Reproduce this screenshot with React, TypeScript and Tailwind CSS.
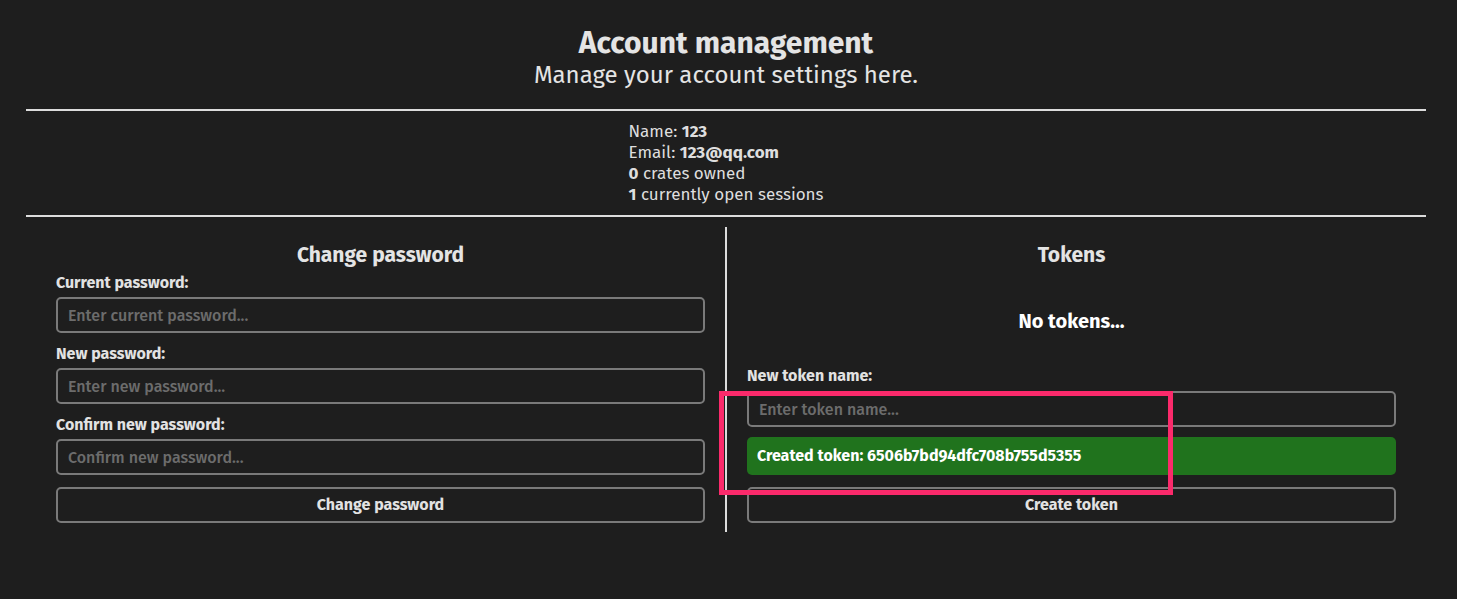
import React from "react";

const font = { fontFamily: '"Fira Sans", "Open Sans", "Noto Sans", sans-serif' };

function Field({ label, placeholder, gap = "mb-[3px]" }: { label: string; placeholder: string; gap?: string }) {
  return (
    <div className="flex flex-col">
      <label className={`text-[16px] font-bold text-[#e2e2e2] leading-[22px] ${gap}`}>{label}</label>
      <input
        className="h-[36px] rounded-[5px] border-2 border-[#7a7a7a] bg-transparent px-[10px] text-[16px] font-medium text-[#ddd] placeholder:text-[#6c6c6c] outline-none"
        placeholder={placeholder}
      />
    </div>
  );
}

export default function App() {
  return (
    <div className="min-h-[599px] w-full bg-[#1e1e1e] text-[#e0e0e0]" style={font}>
      <div className="pl-[26px] pr-[31px]">
        <div className="flex flex-col items-center pt-[25px] pb-[20px]">
          <h1 className="text-[30px] font-bold leading-[36px] text-[#e4e4e4]">Account management</h1>
          <p className="text-[24px] leading-[28px] text-[#e4e4e4]">Manage your account settings here.</p>
        </div>
        <div className="h-[2px] bg-[#dcdcdc]" />
        <div className="flex justify-center py-[10px]">
          <div className="text-[17px] leading-[21px] text-[#dedede]">
            <div>Name: <b>123</b></div>
            <div>Email: <b>123@qq.com</b></div>
            <div><b>0</b> crates owned</div>
            <div><b>1</b> currently open sessions</div>
          </div>
        </div>
        <div className="h-[2px] bg-[#dcdcdc]" />
        <div className="flex mt-[10px]">
          <div className="flex-1 pl-[30px] pr-[20px] flex flex-col">
            <h2 className="text-[21px] font-bold text-center leading-[28px] text-[#e4e4e4] mt-[14px] mb-[3px]">Change password</h2>
            <div className="flex flex-col gap-[10px]">
              <Field label="Current password:" placeholder="Enter current password..." />
              <Field label="New password:" placeholder="Enter new password..." />
              <Field label="Confirm new password:" placeholder="Confirm new password..." />
            </div>
            <button className="mt-[12px] h-[36px] rounded-[5px] border-2 border-[#7a7a7a] text-[16px] font-bold text-[#e2e2e2]">
              Change password
            </button>
          </div>
          <div className="w-[2px] bg-[#dcdcdc] h-[305px]" />
          <div className="flex-1 pl-[20px] pr-[30px] flex flex-col">
            <h2 className="text-[21px] font-bold text-center leading-[28px] text-[#e4e4e4] mt-[14px]">Tokens</h2>
            <div className="text-center text-[20px] font-bold text-white leading-[28px] mt-[38px] mb-[30px]">No tokens...</div>
            <Field label="New token name:" placeholder="Enter token name..." gap="mb-[4px]" />
            <div className="mt-[10px] h-[38px] rounded-[5px] bg-[#20731d] px-[10px] flex items-center text-[16px] font-bold text-white">
              Created token: 6506b7bd94dfc708b755d5355
            </div>
            <button className="mt-[12px] h-[36px] rounded-[5px] border-2 border-[#7a7a7a] text-[16px] font-bold text-[#e2e2e2]">
              Create token
            </button>
          </div>
        </div>
      </div>
      <div className="absolute left-[719px] top-[391px] w-[454px] h-[104px] border-[5px] border-[#fb2a6b] pointer-events-none" />
    </div>
  );
}
